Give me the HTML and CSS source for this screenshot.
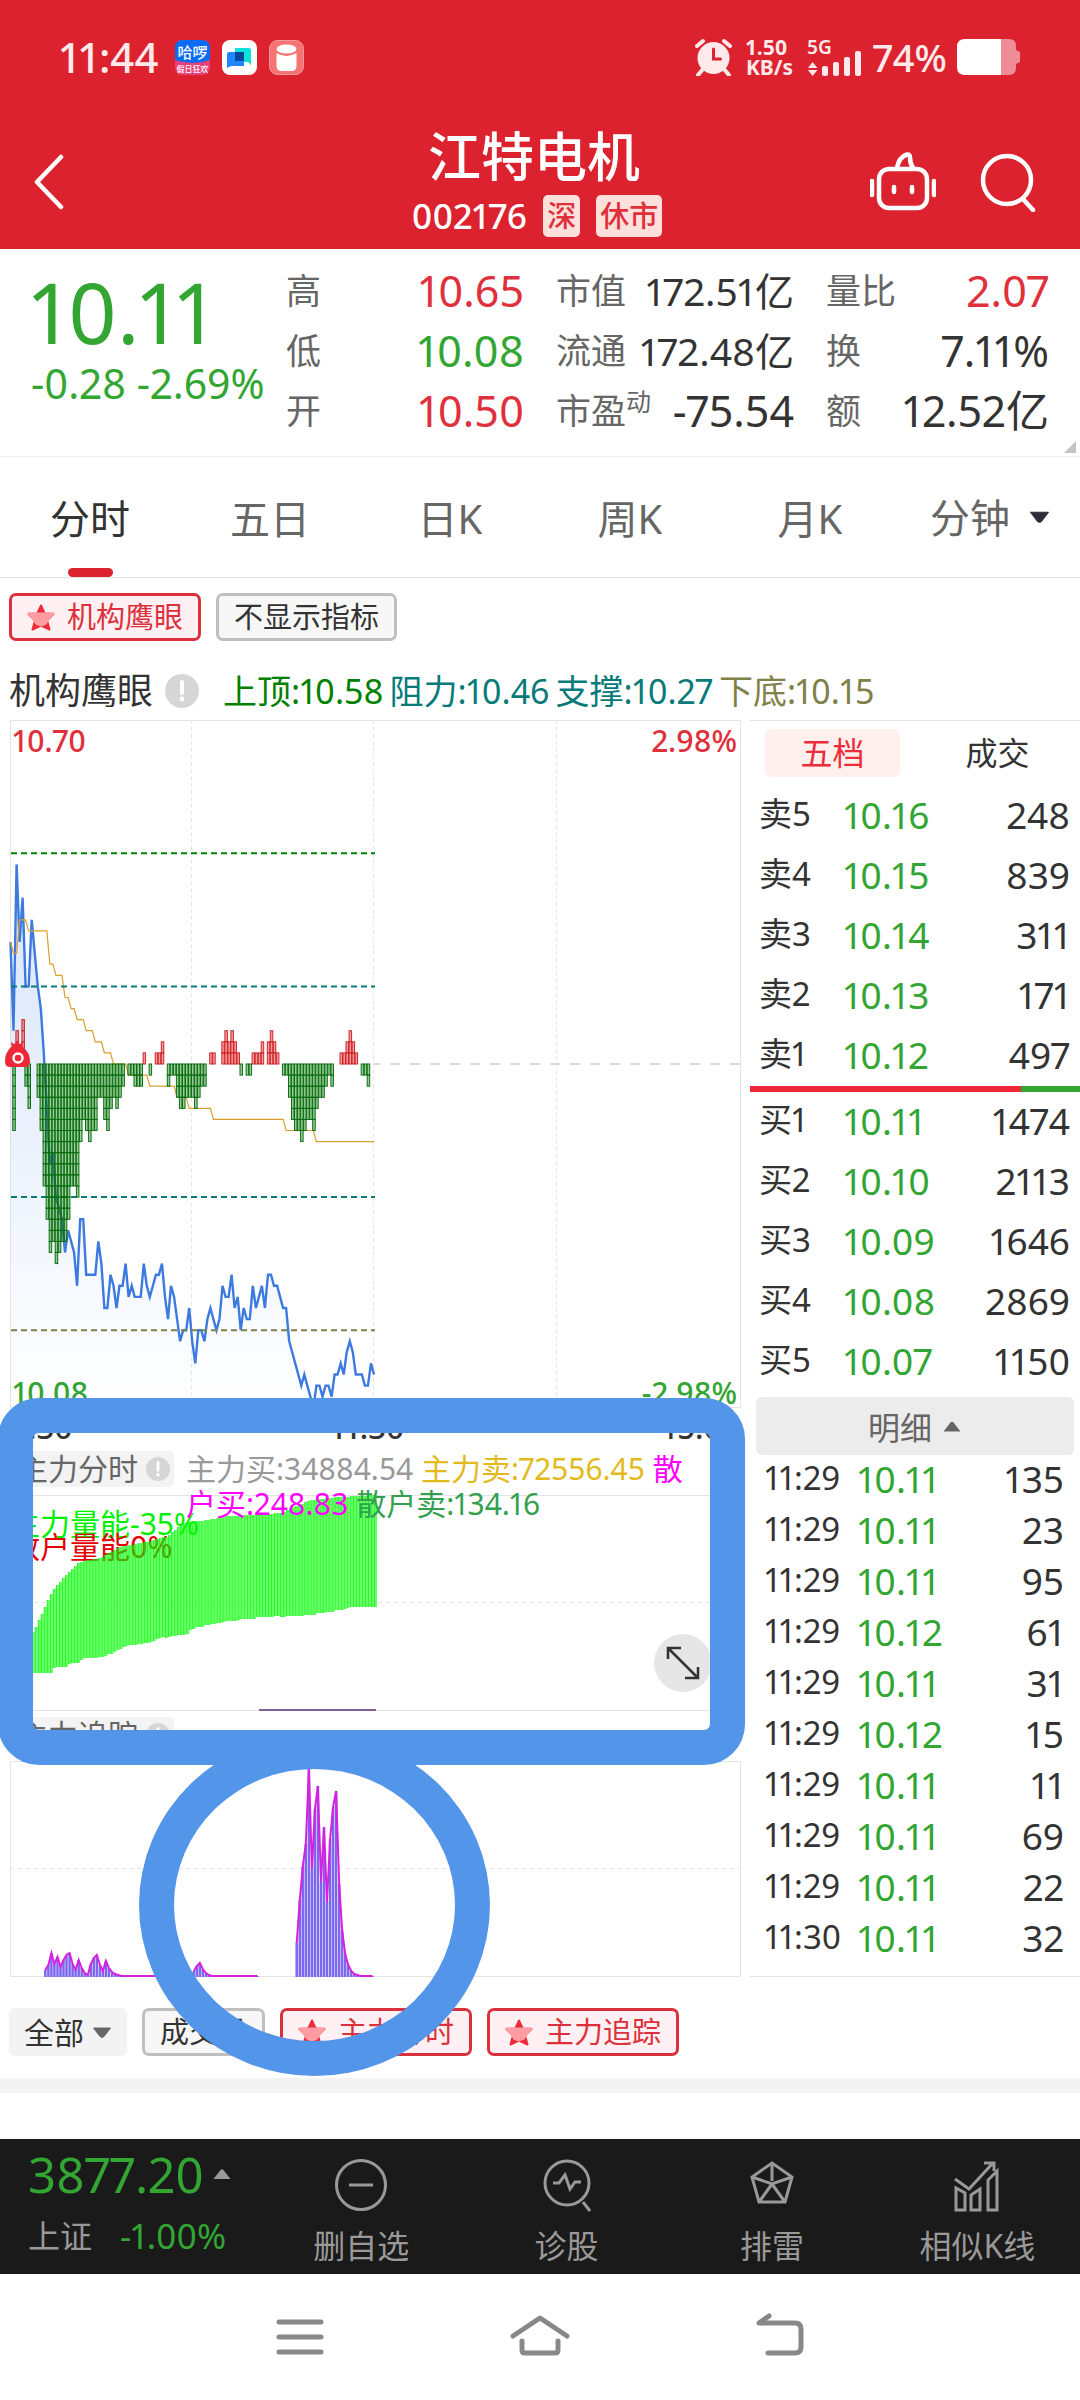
FILE: index.html
```html
<!DOCTYPE html>
<html lang="zh-CN">
<head>
    <meta charset="UTF-8">
    <meta name="viewport" content="width=device-width, initial-scale=1.0">
    <title>江特电机 002176</title>
    <link rel="stylesheet" href="styles.css">
</head>
<body>

<!-- 公用图标 -->
<svg class="sprite" aria-hidden="true">
    <symbol id="star" viewBox="0 0 28 27">
        <path d="M14 1.500 17.700 9.500 26.500 10 20 16.500 22.500 25.500 14 21.500 5.500 25.500 8 16.500 1.500 10 10.300 9.500Z" fill="#ee2b38" stroke="#ee2b38" stroke-width="2" stroke-linejoin="round"/>
        <path d="M1.500 9.500H26.500L20.500 16.500 19 19.500 14 21.500 9 19.500 7.500 16.500Z" fill="#ff9ca2" stroke="#ff9ca2" stroke-width="2" stroke-linejoin="round"/>
    </symbol>
    <symbol id="info" viewBox="0 0 34 34">
        <circle cx="17" cy="17" r="17" fill="#d6d6d6"/>
        <path d="M17 8v11" stroke="#fff" stroke-width="4" stroke-linecap="round"/>
        <circle cx="17" cy="25" r="2.400" fill="#fff"/>
    </symbol>
    <symbol id="down" viewBox="0 0 20 11"><path d="M1.500 1h17L12 9.500q-2 2-4 0Z" fill="currentColor" stroke="currentColor" stroke-linejoin="round"/></symbol>
    <symbol id="up" viewBox="0 0 20 11"><path d="M1.500 10.500h17L11.500 1.500q-1.500-1.500-3 0Z" fill="currentColor"/></symbol>
</svg>

<header class="top">
    <div class="status-bar">
        <div class="status-left">
            <span class="clock">11:44</span>
            <svg width="35" height="35" viewBox="0 0 35 35">
                <rect width="35" height="35" rx="8" fill="#e8407a"/>
                <path d="M0 20V8q0-8 8-8h19q8 0 8 8v12q-17 6-35 0Z" fill="#0a6cf5"/>
                <text x="17.500" y="18" class="app-name">哈啰</text>
                <text x="17.500" y="32" class="app-tag">假日狂欢</text>
            </svg>
            <svg width="35" height="35" viewBox="0 0 35 35">
                <rect width="35" height="35" rx="8" fill="#fff"/>
                <path d="M13 8h14q2 0 2 2v15l-3-3H13Z" fill="#0ee0dc"/>
                <path d="M5 14q0-2 2-2h15v14H9l-4 2Z" fill="#1f86ff"/>
                <path d="M13 12h9v9h-9Z" fill="#00499a"/>
            </svg>
            <svg width="35" height="35" viewBox="0 0 35 35">
                <rect x=".5" y=".5" width="34" height="34" rx="8" fill="#f77272" stroke="#f49a9a"/>
                <ellipse cx="17.500" cy="9" rx="10" ry="4.500" fill="#fff"/>
                <path d="M7.500 13q10 6 20 0v13q0 5-5 5h-10q-5 0-5-5Z" fill="#fff"/>
            </svg>
        </div>
        <div class="status-right">
            <svg width="37" height="38" viewBox="0 0 37 38">
                <circle cx="18.500" cy="20" r="16" fill="#ffe9eb"/>
                <path d="M2 8 8 3M35 8 29 3M8 31l-5 6M29 31l5 6" stroke="#ffe9eb" stroke-width="4" stroke-linecap="round"/>
                <path d="M18.500 11v10h7" fill="none" stroke="#dc222e" stroke-width="3" stroke-linecap="round"/>
            </svg>
            <span class="net-speed"><span>1.50</span><span>KB/s</span></span>
            <svg width="56" height="38" viewBox="0 0 56 38" fill="#ffe9eb" class="signal">
                <text x="0" y="16" class="net-type">5G</text>
                <path d="M5.500 24l5 6H1ZM5.500 38l5-6H1Z"/>
                <rect x="15" y="28" width="6" height="10" rx="2"/>
                <rect x="26" y="24" width="6" height="14" rx="2"/>
                <rect x="37" y="19" width="6" height="19" rx="2"/>
                <rect x="48" y="13" width="6" height="25" rx="2"/>
            </svg>
            <span class="battery-text">74%</span>
            <svg width="63" height="36" viewBox="0 0 63 36">
                <path d="M44 0h8q7 0 7 7v4l4 2v10l-4 2v4q0 7-7 7h-8Z" fill="#ee8d95"/>
                <path d="M44 0H8Q0 0 0 8v20q0 8 8 8h36Z" fill="#fff"/>
            </svg>
        </div>
    </div>

    <div class="title-bar">
        <button class="icon-btn back" aria-label="返回">
            <svg width="32" height="56" viewBox="0 0 32 56"><path d="M29 3 5 28 29 53" fill="none" stroke="#fff" stroke-width="4.500" stroke-linecap="round" stroke-linejoin="round"/></svg>
        </button>
        <div class="stock">
            <h1>江特电机</h1>
            <div class="stock-sub"><span>002176</span><span class="badge">深</span><span class="badge">休市</span></div>
        </div>
        <div class="title-actions">
            <button class="icon-btn" aria-label="智能助手">
                <svg width="66" height="60" viewBox="0 0 66 60" fill="none" stroke="#fff" stroke-width="4.500" stroke-linecap="round" stroke-linejoin="round">
                    <rect x="9" y="17" width="48" height="39" rx="10"/>
                    <path d="M2 29v14M64 29v14M24 35v5M42 35v5"/>
                    <path d="M27 16q2-11 10-13.500 3-.500 3 3 0 6 3 10.500"/>
                </svg>
            </button>
            <button class="icon-btn" aria-label="搜索">
                <svg width="56" height="60" viewBox="0 0 56 60" fill="none" stroke="#fff" stroke-width="4.500" stroke-linecap="round">
                    <circle cx="27" cy="28" r="24"/><path d="M43 47l10 11"/>
                </svg>
            </button>
        </div>
    </div>
</header>

<section class="quote">
    <div class="quote-main">
        <div class="price">10.11</div>
        <div class="change">-0.28 -2.69%</div>
    </div>
    <dl class="quote-col">
        <div><dt>高</dt><dd class="red">10.65</dd></div>
        <div><dt>低</dt><dd class="green">10.08</dd></div>
        <div><dt>开</dt><dd class="red">10.50</dd></div>
    </dl>
    <dl class="quote-col">
        <div><dt>市值</dt><dd class="cap">172.51亿</dd></div>
        <div><dt>流通</dt><dd class="cap">172.48亿</dd></div>
        <div><dt>市盈<sup>动</sup></dt><dd>-75.54</dd></div>
    </dl>
    <dl class="quote-col">
        <div><dt>量比</dt><dd class="red">2.07</dd></div>
        <div><dt>换</dt><dd>7.11%</dd></div>
        <div><dt>额</dt><dd>12.52亿</dd></div>
    </dl>
</section>

<nav class="period">
    <button class="active">分时</button>
    <button>五日</button>
    <button>日K</button>
    <button>周K</button>
    <button>月K</button>
    <label class="period-more">
        <select aria-label="分钟周期"><option>分钟</option></select>
        <svg width="21" height="12"><use href="#down"/></svg>
    </label>
</nav>

<div class="chips">
    <button class="chip on"><svg width="28" height="27"><use href="#star"/></svg>机构鹰眼</button>
    <button class="chip">不显示指标</button>
</div>

<div class="eagle">
    <span class="eagle-name">机构鹰眼</span>
    <svg width="34" height="34"><use href="#info"/></svg>
    <div class="eagle-values">
        <span class="c-top">上顶:10.58</span>
        <span class="c-mid">阻力:10.46</span>
        <span class="c-mid">支撑:10.27</span>
        <span class="c-low">下底:10.15</span>
    </div>
</div>

<main class="board">
    <div class="charts">
        <svg id="price-chart" class="chart" viewBox="0 0 750 688">
            <defs>
                <linearGradient id="area" x1="0" y1="0" x2="0" y2="1">
                    <stop offset="0" stop-color="#3c7ae0" stop-opacity=".2"/>
                    <stop offset="1" stop-color="#3c7ae0" stop-opacity="0"/>
                </linearGradient>
            </defs>
            <path d="M10.500.500h730v687h-730Z" fill="none" stroke="#e4e4e4"/>
            <path d="M191.500 0v687M373.500 0v687M556.500 0v687" stroke="#e6e6e6" stroke-dasharray="4 3"/>
            <path d="M374 344h366" stroke="#d8dadc" stroke-width="2" stroke-dasharray="10 10" stroke-dashoffset="-16"/>
            <text x="13" y="32" class="axis red">10.70</text>
            <text x="737" y="32" class="axis red end">2.98%</text>
            <text x="13" y="684" class="axis green">10.08</text>
            <text x="737" y="684" class="axis green end">-2.98%</text>
            <g id="price-data"></g>
            <g>
                <path d="M11 322l3 2 3-2 3 2 3-2-1 7h-10Z" fill="#ee2838"/>
                <path d="M11 327h12q7 6 7 14 0 6-5 6H10q-5 0-5-6 0-8 6-14Z" fill="#ee2838"/>
                <circle cx="18" cy="338" r="4.500" fill="#ee2838" stroke="#fff" stroke-width="2.500"/>
            </g>
        </svg>
        <div class="times"><span>9:30</span><span>11:30</span><span>15:00</span></div>

        <div class="ind-head">
            <span class="ind-tag">主力分时<svg width="24" height="24"><use href="#info"/></svg></span>
            <p class="ind-legend"><span class="c-buy">主力买:34884.54</span> <span class="c-sell">主力卖:72556.45</span> <span class="c-rbuy">散户买:248.83</span> <span class="c-rsell">散户卖:134.16</span></p>
        </div>
        <div class="chart-wrap">
            <svg class="chart" viewBox="0 0 750 216">
                <path d="M10.500.500h730v215h-730Z" fill="none" stroke="#e4e4e4"/>
                <path d="M10 107.500h730" stroke="#e6e6e6" stroke-dasharray="4 4"/>
                <text x="10" y="40" class="power" fill="#00f000">主力量能-35%</text>
                <text x="10" y="63" class="power" fill="#e60000">散户量能0%</text>
                <g id="power-data"></g>
                <path d="M259 215h117" stroke="#80609a" stroke-width="2"/>
            </svg>
            <button class="expand" aria-label="全屏">
                <svg width="36" height="36" viewBox="0 0 36 36" fill="none" stroke="#333" stroke-width="2.500"><path d="M3 14V3h13M33 22v11H20M3 3l30 30"/></svg>
            </button>
        </div>

        <div class="ind-head second">
            <span class="ind-tag">主力追踪<svg width="24" height="24"><use href="#info"/></svg></span>
        </div>
        <svg class="chart" viewBox="0 0 750 216">
            <path d="M10.500.500h730v215h-730Z" fill="none" stroke="#e4e4e4"/>
            <path d="M10 107.500h730" stroke="#e6e6e6" stroke-dasharray="4 4"/>
            <g id="track-data"></g>
        </svg>

        <!-- 手绘标注 -->
        <div class="mark mark-circle"></div>
        <div class="mark mark-box"></div>
    </div>

    <aside class="side">
        <div class="side-tabs"><button class="active">五档</button><button>成交</button></div>
        <table class="depth">
            <tr><th>卖5</th><td>10.16</td><td>248</td></tr>
            <tr><th>卖4</th><td>10.15</td><td>839</td></tr>
            <tr><th>卖3</th><td>10.14</td><td>311</td></tr>
            <tr><th>卖2</th><td>10.13</td><td>171</td></tr>
            <tr><th>卖1</th><td>10.12</td><td>497</td></tr>
        </table>
        <div class="ratio"><span style="width: 82%"></span></div>
        <table class="depth">
            <tr><th>买1</th><td>10.11</td><td>1474</td></tr>
            <tr><th>买2</th><td>10.10</td><td>2113</td></tr>
            <tr><th>买3</th><td>10.09</td><td>1646</td></tr>
            <tr><th>买4</th><td>10.08</td><td>2869</td></tr>
            <tr><th>买5</th><td>10.07</td><td>1150</td></tr>
        </table>
        <button class="detail-btn">明细<svg width="20" height="11"><use href="#up"/></svg></button>
        <table class="trades">
            <tr><th>11:29</th><td>10.11</td><td>135</td></tr>
            <tr><th>11:29</th><td>10.11</td><td>23</td></tr>
            <tr><th>11:29</th><td>10.11</td><td>95</td></tr>
            <tr><th>11:29</th><td>10.12</td><td>61</td></tr>
            <tr><th>11:29</th><td>10.11</td><td>31</td></tr>
            <tr><th>11:29</th><td>10.12</td><td>15</td></tr>
            <tr><th>11:29</th><td>10.11</td><td>11</td></tr>
            <tr><th>11:29</th><td>10.11</td><td>69</td></tr>
            <tr><th>11:29</th><td>10.11</td><td>22</td></tr>
            <tr><th>11:30</th><td>10.11</td><td>32</td></tr>
        </table>
    </aside>
</main>

<div class="chips bottom">
    <label class="chip-select">
        <select aria-label="指标分类"><option>全部</option></select>
        <svg width="20" height="11"><use href="#down"/></svg>
    </label>
    <button class="chip">成交量</button>
    <button class="chip on"><svg width="28" height="27"><use href="#star"/></svg>主力分时</button>
    <button class="chip on"><svg width="28" height="27"><use href="#star"/></svg>主力追踪</button>
</div>
<div class="strip"></div>

<footer class="toolbar">
    <a class="index" href="#">
        <span class="index-price">3877.20<svg width="20" height="12"><use href="#up"/></svg></span>
        <span class="index-sub"><span>上证</span><span class="index-pct">-1.00%</span></span>
    </a>
    <button>
        <svg width="54" height="54" viewBox="0 0 54 54"><circle cx="27" cy="27" r="24.500"/><path d="M15 27h24"/></svg>
        删自选
    </button>
    <button>
        <svg width="54" height="54" viewBox="0 0 54 54"><circle cx="27" cy="25" r="22"/><path d="M13 25h6l6-8 5 14 5-7h6M43 44l7 9"/></svg>
        诊股
    </button>
    <button>
        <svg width="54" height="54" viewBox="0 0 54 54"><path d="M27 5 47 19 40 44H14L7 19ZM27 5v18M7 19l20 7 20-7M27 26 14 44M27 26l13 18"/></svg>
        排雷
    </button>
    <button>
        <svg width="54" height="54" viewBox="0 0 54 54"><path d="M6 52V30l9 5v17ZM21 52V37l9-6v21ZM38 52V22l9-9v39ZM5 21l14 10L43 5M34 5h10v8"/></svg>
        相似K线
    </button>
</footer>

<nav class="sys-nav">
    <button aria-label="最近任务"><svg width="60" height="48" viewBox="0 0 60 48"><path d="M9 9h42M9 24h42M9 39h42"/></svg></button>
    <button aria-label="主页"><svg width="60" height="48" viewBox="0 0 60 48"><path d="M3 23 30 5l27 18M12 28v9q0 3 3 3h30q3 0 3-3v-9"/></svg></button>
    <button aria-label="返回"><svg width="60" height="48" viewBox="0 0 60 48"><path d="M19 3 9 10H45q6 0 6 6v18q0 6-6 6H18" /></svg></button>
</nav>

<script>
const STEP = 730 / 241;      // 每分钟宽度
const TICK = 11.09;          // 每分钱高度
const BASE = 344;            // 昨收 10.39 的位置

// 与昨收的差价（分）
const price = [11,3,18,11,15,7,7,13,10,7,5,1,-4,-9,-8,-12,-13,-14,-17,-15,-16,-17,-20,-14,-14,-19,-19,-19,-19,-16,
    -18,-22,-22,-19,-20,-22,-20,-20,-18,-21,-20,-21,-21,-21,-18,-20,-21,-20,-19,-19,-18,-21,-23,-20,-21,-23,-25,-24,-24,-22,
    -25,-27,-24,-24,-25,-23,-22,-23,-24,-23,-20,-21,-21,-19,-22,-21,-24,-22,-23,-23,-20,-22,-21,-20,-22,-19,-19,-20,-20,-21,
    -22,-22,-25,-26,-27,-28,-29,-28,-29,-30,-31,-29,-29,-30,-29,-29,-30,-28,-28,-27,-28,-26,-25,-26,-28,-28,-28,-29,-29,-27,-28];

// 均价：[起始分钟, 差价]
const avg = [[0,11],[1,10],[3,13],[6,12],[13,9],[15,8],[18,6],[20,5],[22,4],[25,3],[28,2],[31,1],[34,0],[39,-1],
    [46,-2],[55,-3],[59,-4],[67,-5],[91,-6],[101,-7]];

const flow = [0,-6,3,1,4,-2,-4,0,0,-3,-6,-11,-14,-17,-16,-18,-17,-16,-16,-14,-11,-11,-12,-7,-5,-6,-7,-6,-6,-3,
    -3,-5,-6,-4,-3,-4,-3,-2,0,-1,-1,-2,-2,-2,1,0,-1,0,1,1,2,0,-2,-1,-1,-3,-4,-4,-3,-3,
    -3,-4,-3,-2,-2,0,1,1,0,0,2,3,2,3,2,1,-1,0,-1,-1,1,1,1,2,0,2,3,2,1,0,
    -1,-1,-3,-5,-6,-6,-7,-6,-5,-5,-6,-4,-3,-3,-2,-1,-2,0,0,1,1,2,3,2,1,0,-1,-1,-2,0,0];

const px = i => (10.5 + i * STEP).toFixed(1);
const py = t => (BASE - t * TICK).toFixed(1);

function drawPrice() {
    const line = price.map((t, i) => px(i) + "," + py(t)).join(" ");
    let out = `<polygon points="10.5,687 ${line} ${px(120)},687" fill="url(#area)"/>`;
    out += `<polyline points="${line}" fill="none" stroke="#3c7ae0" stroke-width="2.400"/>`;

    let pts = [];
    avg.forEach(([m, t], k) => {
        const end = k + 1 < avg.length ? avg[k + 1][0] - 1 : 120;
        pts.push(px(m) + "," + py(t), px(end) + "," + py(t));
    });
    out += `<polyline points="${pts.join(" ")}" fill="none" stroke="#dba02c" stroke-width="1.200"/>`;

    [[19, "#008000"], [7, "#087a7a"], [-12, "#087a7a"], [-24, "#80804a"]].forEach(([t, c]) => {
        out += `<path d="M11 ${py(t)}H375" stroke="${c}" stroke-width="2" stroke-dasharray="6 4"/>`;
    });

    flow.forEach((n, i) => {
        const up = n > 0;
        for (let k = 0; k < Math.abs(n); k++) {
            const y = up ? BASE - (k + 1) * TICK : BASE + k * TICK;
            out += `<rect x="${(10.8 + i * STEP - 1).toFixed(1)}" y="${y.toFixed(1)}" width="2.500" height="${TICK}" class="${up ? "cell-up" : "cell-down"}"/>`;
        }
    });
    document.getElementById("price-data").innerHTML = out;
}

// 折线插值
function lerp(points, x) {
    for (let k = 1; k < points.length; k++) {
        const [x0, y0] = points[k - 1], [x1, y1] = points[k];
        if (x <= x1) return y0 + (y1 - y0) * (x - x0) / (x1 - x0);
    }
    return points[points.length - 1][1];
}

function drawPower() {
    const top = [[10,165],[33,135],[39,123],[51,96],[63,82],[78,67],[87,65],[99,63],[119,52],[145,47],[167,41],[182,28],
        [213,24],[228,21],[262,19],[281,18],[291,13],[310,5],[339,2],[376,0]];
    const bottom = [[10,178],[51,178],[53,172],[66,172],[69,168],[78,168],[81,163],[97,163],[110,159],[125,151],[145,148],
        [160,143],[187,139],[190,134],[210,129],[230,126],[262,122],[303,121],[340,115],[350,112],[376,112]];
    let out = "";
    for (let i = 0; i <= 120; i++) {
        const x = 10.5 + i * STEP;
        const y = lerp(top, x), h = lerp(bottom, x) - y;
        out += `<rect x="${x.toFixed(1)}" y="${y.toFixed(0)}" width="3" height="${h.toFixed(0)}" class="power-fill"/>`;
        out += `<rect x="${x.toFixed(1)}" y="${y.toFixed(0)}" width="1" height="${h.toFixed(0)}" class="power-line"/>`;
    }
    document.getElementById("power-data").innerHTML = out;
}

function drawTrack() {
    const groups = [
        [12, [7,12,24,13,20,10,17,22,24,13,7,17,9,4,2,13,19,22,12,6,16,9,5,3,2,1,1,1,1,1,1,1,1,1,1,1,1,1]],
        [61, [6,11,14,8,4,2,1,1,1,1,1,1,1,1,1,1,1,1,1,1,1,1]],
        [95, [34,77,111,133,209,108,168,191,95,150,75,138,170,186,93,46,23,12,6,3,2,1,1,1,1,1]]
    ];
    let out = "";
    groups.forEach(([start, values]) => {
        values.forEach((v, k) => {
            out += `<path d="M${px(start + k - 0.5)} 216v-${v}" class="track-bar"/>`;
        });
        const line = values.map((v, k) => px(start + k - 0.5) + "," + (216 - v)).join(" ");
        out += `<polyline points="${line}" class="track-line"/>`;
    });
    document.getElementById("track-data").innerHTML = out;
}

drawPrice();
drawPower();
drawTrack();
</script>

</body>
</html>
```
FILE: styles.css
```css
* {
    box-sizing: border-box;
}

body {
    margin: 0;
    background: #fff;
    color: #333;
    font-family: "Noto Sans", "Noto Sans CJK SC", sans-serif;
    font-size: 32px;
    font-variant-numeric: proportional-nums;
}

button, select {
    margin: 0;
    padding: 0;
    border: none;
    background: none;
    color: inherit;
    font: inherit;
    font-variant-numeric: inherit;
    cursor: pointer;
}

select {
    appearance: none;
}

svg {
    display: block;
    flex: none;
}

.sprite {
    position: absolute;
    width: 0;
    height: 0;
}

.red {
    color: #e0303c;
}

.green {
    color: #32a532;
}

/* 顶部 */
.top {
    background: #dc222e;
    color: #fff;
}

.status-bar {
    display: flex;
    justify-content: space-between;
    align-items: center;
    height: 114px;
    padding: 0 60px;
    color: #ffe9eb;
}

.status-left {
    display: flex;
    align-items: center;
    gap: 12px;
}

.status-right {
    display: flex;
    align-items: center;
    gap: 10px;
}

.clock {
    margin-right: 4px;
    font-size: 42px;
    font-weight: 500;
    line-height: 48px;
}

.app-name, .app-tag {
    fill: #fff;
    font-size: 15px;
    font-weight: 500;
    text-anchor: middle;
}

.app-tag {
    font-size: 8px;
}

.net-speed {
    display: flex;
    flex-direction: column;
    margin: 0 4px;
    font-size: 21px;
    font-weight: 700;
    line-height: 20px;
}

.signal {
    overflow: visible;
}

.net-type {
    font-size: 19px;
    font-weight: 600;
}

.battery-text {
    font-size: 38px;
    font-weight: 500;
    line-height: 48px;
}

.title-bar {
    display: grid;
    grid-template-columns: 1fr auto 1fr;
    align-items: center;
    height: 135px;
    padding: 0 44px 0 32px;
}

.back {
    justify-self: start;
}

.stock {
    padding-bottom: 8px;
    text-align: center;
}

.stock h1 {
    margin: 0;
    font-size: 53px;
    font-weight: 500;
    line-height: 76px;
}

.stock-sub {
    display: flex;
    justify-content: center;
    align-items: center;
    gap: 16px;
    padding-left: 6px;
    font-size: 35px;
    font-weight: 500;
    line-height: 42px;
}

.badge {
    padding: 0 4px;
    border-radius: 5px;
    background: #ffe0da;
    color: #e0303c;
    font-size: 29px;
}

.title-actions {
    display: flex;
    justify-content: flex-end;
    align-items: center;
    gap: 44px;
}

/* 行情 */
.quote {
    position: relative;
    display: grid;
    grid-template-columns: 254px 238fr 238fr 223fr;
    column-gap: 32px;
    height: 208px;
    padding: 12px 31px 0 0;
    border-bottom: 1px solid #eee;
}

.quote::after {
    content: "";
    position: absolute;
    right: 4px;
    bottom: 3px;
    border-left: 12px solid transparent;
    border-bottom: 12px solid #c4c4c4;
}

.quote-main {
    padding-left: 31px;
    color: #32a532;
    white-space: nowrap;
}

.price {
    font-size: 84px;
    line-height: 102px;
}

.change {
    font-size: 41px;
    line-height: 40px;
}

.quote-col {
    margin: 0;
    line-height: 60px;
    white-space: nowrap;
}

.quote-col div {
    display: flex;
    justify-content: space-between;
    height: 60px;
}

.quote-col dt {
    color: #666;
    font-size: 35px;
}

.quote-col dd {
    margin: 0;
    font-size: 43px;
}

.quote-col .cap {
    font-size: 39px;
}

.quote-col sup {
    font-size: 25px;
    line-height: 0;
}

/* 周期 */
.period {
    display: grid;
    grid-template-columns: repeat(6, 1fr);
    height: 121px;
    border-bottom: 1px solid #e4e4e4;
    color: #666;
    font-size: 40px;
}

.period .active {
    position: relative;
    color: #333;
}

.period .active::after {
    content: "";
    position: absolute;
    left: 50%;
    bottom: 0;
    width: 45px;
    height: 9px;
    margin-left: -22px;
    border-radius: 5px;
    background: #dc222e;
}

.period-more {
    display: flex;
    justify-content: center;
    align-items: center;
    gap: 19px;
}

.period-more svg {
    color: #2b2d3a;
}

/* 指标按钮 */
.chips {
    display: flex;
    gap: 15px;
    padding: 15px 9px 0;
}

.chip {
    display: flex;
    justify-content: center;
    align-items: center;
    gap: 12px;
    height: 48px;
    padding: 0 15px;
    border: 3px solid #bfbfbf;
    border-radius: 7px;
    background: #f7f7f7;
    font-size: 29px;
    line-height: 42px;
}

.chip.on {
    border-color: #dc303c;
    background: #fff1f3;
    color: #dc303c;
}

.eagle {
    display: flex;
    align-items: center;
    height: 79px;
    padding: 20px 9px 0;
    line-height: 40px;
    white-space: nowrap;
}

.eagle-name {
    margin-right: 12px;
    font-size: 36px;
}

.eagle-values {
    display: flex;
    gap: 6px;
    margin-left: 24px;
    font-size: 34px;
}

.c-top {
    color: #008000;
}

.c-mid {
    color: #087a7a;
}

.c-low {
    color: #80804a;
}

/* 图表 */
.board {
    display: grid;
    grid-template-columns: 750fr 330fr;
}

.charts {
    position: relative;
    min-width: 0;
}

.chart {
    width: 100%;
    height: auto;
    overflow: visible;
}

.axis {
    fill: currentColor;
    font-size: 30px;
    font-weight: 500;
}

.end {
    text-anchor: end;
}

.cell-up {
    fill: rgba(255, 0, 0, .4);
    stroke: #c8282c;
}

.cell-down {
    fill: rgba(0, 128, 0, .4);
    stroke: #0d6e12;
}

.times {
    display: flex;
    justify-content: space-between;
    height: 43px;
    padding: 0 10px;
    font-size: 31px;
    font-weight: 500;
    line-height: 39px;
}

.ind-head {
    position: relative;
    z-index: 1;
    display: flex;
    gap: 12px;
    height: 44px;
    padding: 0 38px 0 10px;
}

.ind-head.second {
    height: 50px;
    padding-top: 6px;
}

.ind-tag {
    display: flex;
    flex: none;
    align-items: center;
    gap: 8px;
    width: 164px;
    height: 36px;
    padding-left: 8px;
    border-radius: 5px;
    background: #f3f3f3;
    color: #666;
    font-size: 30px;
    line-height: 36px;
}

.ind-legend {
    margin: 0;
    font-size: 30px;
    line-height: 35px;
}

.c-buy {
    color: #999;
}

.c-sell {
    color: #e3b91c;
}

.c-rbuy {
    color: #f0f;
}

.c-rsell {
    color: #32a04e;
}

.power {
    font-size: 30px;
}

.power-fill {
    fill: rgba(0, 255, 0, .6);
}

.power-line {
    fill: rgba(0, 240, 0, .6);
}

.track-bar {
    stroke: #7b68ee;
    stroke-width: 2.5;
}

.track-line {
    fill: none;
    stroke: #d820e0;
    stroke-width: 2;
}

.chart-wrap {
    position: relative;
}

.expand {
    position: absolute;
    right: 38px;
    bottom: 19px;
    display: grid;
    place-items: center;
    width: 58px;
    height: 58px;
    border-radius: 50%;
    background: #e6e6e6;
}

.mark {
    position: absolute;
    z-index: 2;
    border: 35px solid #5395e9;
    pointer-events: none;
}

.mark-box {
    left: -2px;
    top: 678px;
    width: 747px;
    height: 367px;
    border-radius: 41px;
}

.mark-circle {
    left: 139px;
    top: 1014px;
    width: 351px;
    height: 342px;
    border-radius: 50%;
}

/* 五档 */
.side {
    border-top: 1px solid #e4e4e4;
    border-bottom: 1px solid #e4e4e4;
}

.side-tabs {
    display: grid;
    grid-template-columns: 1fr 1fr;
    gap: 30px;
    padding: 8px 15px 9px;
    line-height: 48px;
}

.side-tabs .active {
    border-radius: 6px;
    background: #ffefed;
    color: #ee2b38;
}

.depth, .trades {
    width: 100%;
    border-collapse: collapse;
    table-layout: fixed;
    font-size: 37px;
}

.depth tr {
    height: 60px;
}

.trades tr {
    height: 51px;
}

.depth th, .trades th {
    width: 94px;
    padding: 0 0 5px 9px;
    font-size: 33px;
    font-weight: 400;
    line-height: 44px;
    text-align: left;
}

.depth td, .trades td {
    padding: 0 10px 3px 0;
    color: #32a532;
    line-height: 46px;
}

.depth td:last-child, .trades td:last-child {
    color: #333;
    text-align: right;
}

.trades th {
    width: 108px;
    padding-left: 15px;
}

.trades td {
    padding-right: 16px;
}

.ratio {
    height: 6px;
    background: #32a532;
}

.ratio span {
    display: block;
    height: 100%;
    background: #ee2838;
}

.detail-btn {
    display: flex;
    justify-content: center;
    align-items: center;
    gap: 10px;
    width: calc(100% - 12px);
    height: 58px;
    margin: 5px 6px 0;
    border-radius: 6px;
    background: #ececec;
    color: #666;
}

/* 底部 */
.bottom {
    padding-top: 31px;
}

.chip-select {
    display: flex;
    align-items: center;
    gap: 8px;
    height: 48px;
    padding: 0 15px;
    border-radius: 7px;
    background: #f3f3f3;
    font-size: 30px;
}

.chip-select svg {
    color: #666;
}

.strip {
    height: 15px;
    margin: 22px 0 46px;
    background: #f3f3f3;
}

.toolbar {
    display: grid;
    grid-template-columns: 258fr repeat(4, 205fr);
    height: 135px;
    background: #1a1a1a;
    color: #999;
    line-height: 40px;
}

.toolbar button {
    display: flex;
    flex-direction: column;
    align-items: center;
    gap: 14px;
    padding-top: 19px;
}

.toolbar button svg {
    fill: none;
    stroke: #999;
    stroke-width: 3;
}

.index {
    padding: 10px 0 0 28px;
    color: #999;
    text-decoration: none;
}

.index-price {
    display: flex;
    align-items: center;
    gap: 8px;
    color: #32a532;
    font-size: 49px;
    line-height: 50px;
}

.index-price svg {
    color: #999;
}

.index-sub {
    display: flex;
    gap: 28px;
    margin-top: 17px;
}

.index-pct {
    color: #32a532;
    font-size: 35px;
}

.sys-nav {
    display: flex;
    justify-content: center;
    align-items: center;
    gap: 180px;
    height: 126px;
}

.sys-nav svg {
    fill: none;
    stroke: #888;
    stroke-width: 5;
    stroke-linecap: round;
    stroke-linejoin: round;
}
```
